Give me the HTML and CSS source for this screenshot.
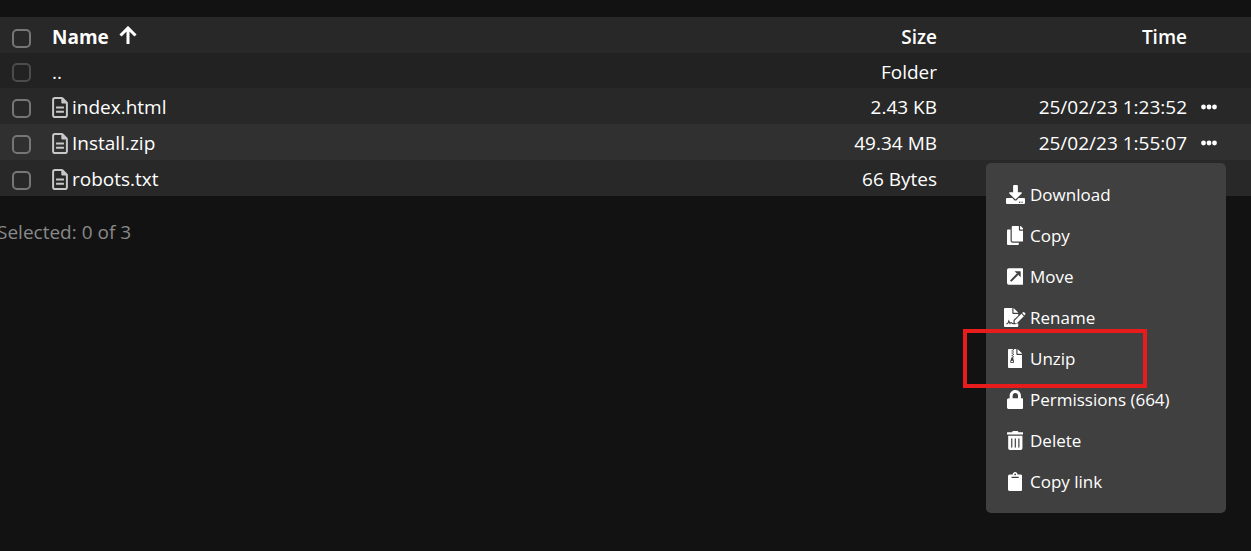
FILE: index.html
```html
<!DOCTYPE html>
<html lang="en">
<head>
    <meta charset="UTF-8">
    <meta name="viewport" content="width=device-width, initial-scale=1.0">
    <title>File manager</title>
    <link rel="stylesheet" href="styles.css">
</head>
<body>
    <svg class="sprite" aria-hidden="true">
        <symbol id="file" viewBox="0 0 384 512">
            <path d="M64 464c-8.800 0-16-7.200-16-16V64c0-8.800 7.200-16 16-16H224v80c0 17.700 14.300 32 32 32h80V448c0 8.800-7.200 16-16 16H64zM64 0C28.700 0 0 28.700 0 64V448c0 35.300 28.700 64 64 64H320c35.300 0 64-28.700 64-64V154.500c0-17-6.700-33.300-18.700-45.300L274.700 18.700C262.700 6.700 246.500 0 229.500 0H64zM96 232h192v48H96zM96 336h192v48H96z"/>
        </symbol>
        <symbol id="dots" viewBox="0 0 16 6">
            <circle cx="2.500" cy="3" r="2.400"/><circle cx="8" cy="3" r="2.400"/><circle cx="13.500" cy="3" r="2.400"/>
        </symbol>
    </svg>

    <main class="files">
        <table class="file-table">
            <thead>
                <tr>
                    <th class="col-check"><input type="checkbox" class="check" aria-label="Select all"></th>
                    <th class="col-name">Name <svg class="sort" viewBox="0 0 18 19"><path d="M9 18V2M1.500 9.500L9 2l7.500 7.500"/></svg></th>
                    <th class="col-size">Size</th>
                    <th class="col-time">Time</th>
                    <th class="col-more"></th>
                </tr>
            </thead>
            <tbody>
                <tr class="row-up">
                    <td><input type="checkbox" class="check" aria-label="Parent folder" disabled></td>
                    <td class="col-name">..</td>
                    <td class="col-size">Folder</td>
                    <td class="col-time"></td>
                    <td class="col-more"></td>
                </tr>
                <tr>
                    <td><input type="checkbox" class="check" aria-label="Select index.html"></td>
                    <td class="col-name"><a class="file" href="#"><svg class="file-icon"><use href="#file"/></svg>index.html</a></td>
                    <td class="col-size">2.43 KB</td>
                    <td class="col-time">25/02/23 1:23:52</td>
                    <td class="col-more"><button class="more" aria-label="More"><svg class="dots"><use href="#dots"/></svg></button></td>
                </tr>
                <tr class="row-active">
                    <td><input type="checkbox" class="check" aria-label="Select Install.zip"></td>
                    <td class="col-name"><a class="file" href="#"><svg class="file-icon"><use href="#file"/></svg>Install.zip</a></td>
                    <td class="col-size">49.34 MB</td>
                    <td class="col-time">25/02/23 1:55:07</td>
                    <td class="col-more">
                        <button class="more" aria-label="More"><svg class="dots"><use href="#dots"/></svg></button>
                        <div class="menu">
                            <button class="menu-item">
                                <span class="menu-icon"><svg viewBox="0 0 512 512"><path d="M216 0h80c13.300 0 24 10.700 24 24v168h87.700c17.800 0 26.700 21.500 14.100 34.100L269.700 378.300c-7.500 7.500-19.800 7.500-27.300 0L90.100 226.100c-12.600-12.600-3.700-34.100 14.100-34.100H192V24c0-13.300 10.700-24 24-24zm296 376v112c0 13.300-10.700 24-24 24H24c-13.300 0-24-10.700-24-24V376c0-13.300 10.700-24 24-24h146.700l49 49c20.100 20.100 52.500 20.100 72.600 0l49-49H488c13.300 0 24 10.700 24 24zm-124 88c0-11-9-20-20-20s-20 9-20 20 9 20 20 20 20-9 20-20zm64 0c0-11-9-20-20-20s-20 9-20 20 9 20 20 20 20-9 20-20z"/></svg></span>
                                Download
                            </button>
                            <button class="menu-item">
                                <span class="menu-icon"><svg viewBox="0 0 448 512"><path d="M320 448v40c0 13.300-10.700 24-24 24H24c-13.300 0-24-10.700-24-24V120c0-13.300 10.700-24 24-24h72v296c0 30.900 25.100 56 56 56h168zm0-344V0H152c-13.300 0-24 10.700-24 24v368c0 13.300 10.700 24 24 24h272c13.300 0 24-10.700 24-24V128H344c-13.200 0-24-10.800-24-24zm121-31L375 7A24 24 0 0 0 358 0H352v96h96v-6a24 24 0 0 0-7-17z"/></svg></span>
                                Copy
                            </button>
                            <button class="menu-item">
                                <span class="menu-icon"><svg viewBox="0 0 448 512"><rect y="32" width="448" height="448" rx="48"/><path class="cut" d="M100 380L290 190"/><path class="hole" d="M204 112H352a16 16 0 0 1 16 16V276z"/></svg></span>
                                Move
                            </button>
                            <button class="menu-item">
                                <span class="menu-icon"><svg viewBox="0 0 576 512"><path d="M24 0H224V136a24 24 0 0 0 24 24H384V200L256 326V420H384V488a24 24 0 0 1-24 24H24a24 24 0 0 1-24-24V24A24 24 0 0 1 24 0zM256 0L384 122V128H256z"/><path d="M288 338L470 156L534 220L352 404H288zM488 138L508 118a28 28 0 0 1 40 0L568 138a28 28 0 0 1 0 40L552 202z"/><path class="pen" d="M64 428C105 428 110 416 130 350L162 420C180 385 200 385 214 408Q222 420 250 420H310"/></svg></span>
                                Rename
                            </button>
                            <button class="menu-item marked">
                                <span class="menu-icon"><svg viewBox="0 0 384 512"><path d="M24 0H224V136a24 24 0 0 0 24 24H384V488a24 24 0 0 1-24 24H24a24 24 0 0 1-24-24V24A24 24 0 0 1 24 0zM256 0L384 122V128H256z"/><path class="hole" d="M128 0h32v32h-32zM96 32h32v32H96zM128 64h32v32h-32zM96 96h32v32H96zM128 128h32v32h-32zM96 160h32v32H96zM128 192h32v32h-32zM96 224h40l24 96a50 50 0 1 1-98 0z"/><ellipse cx="111" cy="336" rx="30" ry="22"/></svg></span>
                                Unzip
                            </button>
                            <button class="menu-item">
                                <span class="menu-icon"><svg viewBox="0 0 448 512"><path d="M400 224h-24v-72C376 68.200 307.800 0 224 0S72 68.200 72 152v72H48c-26.500 0-48 21.500-48 48v192c0 26.500 21.500 48 48 48h352c26.500 0 48-21.500 48-48V272c0-26.500-21.500-48-48-48zm-104 0H152v-72c0-39.700 32.300-72 72-72s72 32.300 72 72v72z"/></svg></span>
                                Permissions (664)
                            </button>
                            <button class="menu-item">
                                <span class="menu-icon"><svg viewBox="0 0 448 512"><path d="M32 464a48 48 0 0 0 48 48h288a48 48 0 0 0 48-48V128H32zm272-256a16 16 0 0 1 32 0v224a16 16 0 0 1-32 0zm-96 0a16 16 0 0 1 32 0v224a16 16 0 0 1-32 0zm-96 0a16 16 0 0 1 32 0v224a16 16 0 0 1-32 0zM432 32H312l-9-19A24 24 0 0 0 281 0H167a24 24 0 0 0-22 13L136 32H16A16 16 0 0 0 0 48v32a16 16 0 0 0 16 16h416a16 16 0 0 0 16-16V48a16 16 0 0 0-16-16z"/></svg></span>
                                Delete
                            </button>
                            <button class="menu-item">
                                <span class="menu-icon"><svg viewBox="0 0 384 512"><path d="M384 112v352c0 26.500-21.500 48-48 48H48c-26.500 0-48-21.500-48-48V112c0-26.500 21.500-48 48-48h80c0-35.300 28.700-64 64-64s64 28.700 64 64h80c26.500 0 48 21.500 48 48zM192 40c-13.300 0-24 10.700-24 24s10.700 24 24 24 24-10.700 24-24-10.700-24-24-24m96 114v-20a6 6 0 0 0-6-6H102a6 6 0 0 0-6 6v20a6 6 0 0 0 6 6h180a6 6 0 0 0 6-6z"/></svg></span>
                                Copy link
                            </button>
                        </div>
                    </td>
                </tr>
                <tr>
                    <td><input type="checkbox" class="check" aria-label="Select robots.txt"></td>
                    <td class="col-name"><a class="file" href="#"><svg class="file-icon"><use href="#file"/></svg>robots.txt</a></td>
                    <td class="col-size">66 Bytes</td>
                    <td class="col-time"></td>
                    <td class="col-more"></td>
                </tr>
            </tbody>
        </table>
        <p class="selected">Selected: 0 of 3</p>
    </main>
</body>
</html>
```
FILE: styles.css
```css
html {
    min-height: 100%;
    background: #121212;
}
body {
    margin: 0;
    min-height: 100vh;
    color: #fff;
    font-family: "Open Sans", "Noto Sans", sans-serif;
    font-size: 19px;
    line-height: 26px;
}
.sprite {
    display: none;
}
.files {
    box-sizing: border-box;
    min-height: 100vh;
    padding-top: 17px;
}
.file-table {
    width: 100%;
    border-collapse: collapse;
    table-layout: fixed;
}
tr {
    height: 36px;
    background: #282828;
}
.row-up {
    height: 35px;
    background: #222;
}
.row-active {
    background: #303030;
}
th,
td {
    padding: 5px 0 3px;
    text-align: left;
    vertical-align: middle;
}
th {
    padding: 7px 0 3px;
    font-weight: 600;
}
th.col-name {
    font-weight: 700;
}
.col-check {
    width: 52px;
}
.col-size {
    width: 150px;
    text-align: right;
}
.col-time {
    width: 250px;
    text-align: right;
}
.col-more {
    width: 64px;
    position: relative;
}
.check {
    appearance: none;
    display: block;
    box-sizing: border-box;
    width: 19px;
    height: 19px;
    margin: 2px 0 0 12px;
    border: 2px solid #767676;
    border-radius: 5px;
}
.check:disabled {
    border-color: #4c4c4c;
}
.sort {
    width: 18px;
    height: 19px;
    margin-left: 5px;
    fill: none;
    stroke: #fff;
    stroke-width: 3;
    vertical-align: -1px;
}
.file {
    display: flex;
    align-items: center;
    gap: 4px;
    color: #fff;
    text-decoration: none;
}
.file-icon {
    width: 16px;
    height: 21px;
    fill: #c8c8c8;
}
button {
    border: 0;
    background: none;
    color: #fff;
    font: inherit;
    cursor: pointer;
}
.more {
    display: flex;
    padding: 0 0 0 14px;
}
.dots {
    width: 16px;
    height: 6px;
    fill: #fff;
}

/* context menu */
.menu {
    position: absolute;
    top: 39px;
    right: 25px;
    z-index: 1;
    box-sizing: border-box;
    width: 240px;
    padding: 11px 0;
    border-radius: 5px;
    background: #404040;
}
.menu-item {
    position: relative;
    display: flex;
    align-items: center;
    gap: 5px;
    width: 100%;
    height: 41px;
    padding: 0 19px;
    font-size: 17px;
    text-align: left;
}
.menu-icon {
    display: flex;
    justify-content: center;
    width: 20px;
}
.menu-icon svg {
    flex: none;
    height: 19px;
    fill: #fff;
}
.menu-icon .hole {
    fill: #404040;
}
.menu-icon .cut {
    stroke: #404040;
    stroke-width: 52;
}
.menu-icon .pen {
    fill: none;
    stroke: #404040;
    stroke-width: 30;
}
.marked::after {
    content: "";
    position: absolute;
    top: -9px;
    bottom: -9px;
    left: -23px;
    right: 79px;
    border: 4px solid #e81c1c;
}
.selected {
    margin: 23px 0 0 -3px;
    color: #898989;
}
```
